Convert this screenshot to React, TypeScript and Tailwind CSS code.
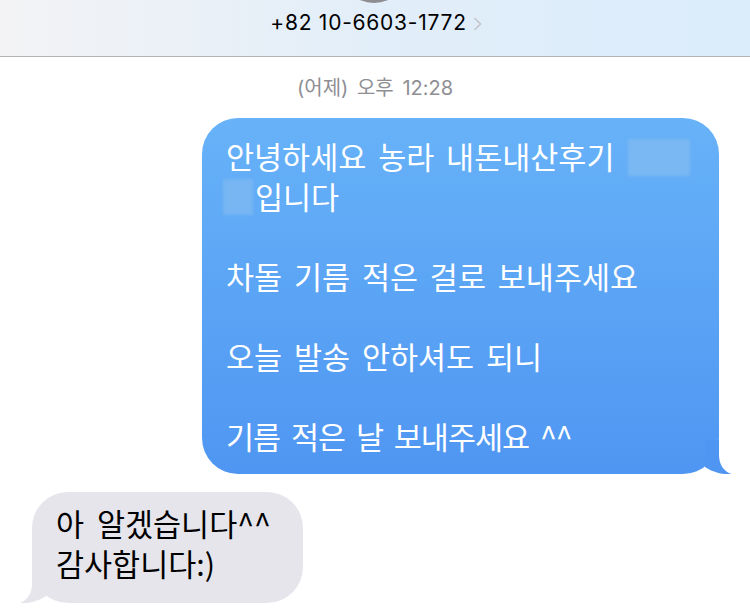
import React from "react";

const KR = '"Noto Sans CJK KR", "Noto Sans", sans-serif';
const UI = 'Inter, "Noto Sans CJK KR", sans-serif';

function BlueTail() {
  return (
    <svg
      className="absolute bottom-0 right-[-12px]"
      width="36"
      height="34"
      viewBox="0 0 36 34"
    >
      <path
        d="M12 0 L24 0 L24 15 C24 25 29 31 36 34 C29 35 17 32 10 27 L10 0 Z"
        fill="#4f96f2"
      />
    </svg>
  );
}

function GrayTail() {
  return (
    <svg
      className="absolute bottom-0 left-[-12px]"
      width="36"
      height="34"
      viewBox="0 0 36 34"
    >
      <path
        d="M24 0 L12 0 L12 15 C12 25 7 31 0 34 C7 35 19 32 26 27 L26 0 Z"
        fill="#e6e5eb"
      />
    </svg>
  );
}

function Line({ children, className = "" }: { children: React.ReactNode; className?: string }) {
  return (
    <div className={"flex h-[40px] items-center whitespace-nowrap " + className}>{children}</div>
  );
}

export default function App() {
  return (
    <div
      className="relative w-[750px] h-[614px] overflow-hidden bg-white"
      style={{ fontFamily: KR }}
    >
      {/* Header */}
      <div className="relative h-[57px] border-b border-[#b4b4b6] bg-gradient-to-r from-[#f3f3f5] via-[#e2eef9] to-[#dbecfb] flex items-start justify-center pt-[8px]">
        <div className="absolute left-[339px] top-[-67px] w-[70px] h-[70px] rounded-full bg-[#8d8d92]" />
        <div className="flex items-center gap-[6px] pl-[2px]">
          <span
            className="text-[21px] leading-[30px] text-black tracking-[0.75px]"
            style={{ fontFamily: "Inter, sans-serif" }}
          >
            +82 10-6603-1772
          </span>
          <svg width="9" height="14" viewBox="0 0 9 14" className="mt-[1px]">
            <path
              d="M1.5 1 L7.5 7 L1.5 13"
              fill="none"
              stroke="#c4c4c9"
              strokeWidth="1.6"
            />
          </svg>
        </div>
      </div>

      {/* Timestamp */}
      <div
        className="mt-[19px] text-center text-[20px] leading-[24px] text-[#8e8e93] [word-spacing:3px]"
        style={{ fontFamily: UI }}
      >
        (어제) 오후 12:28
      </div>

      {/* Outgoing bubble */}
      <div className="mt-[18px] flex justify-end pr-[31px]">
        <div className="relative w-[517px] rounded-[36px] bg-gradient-to-b from-[#67b2f8] to-[#4f96f2] pl-[24px] pr-[20px] pt-[19px] pb-[17px] text-white text-[30.5px] [word-spacing:5px]">
          <Line>
            <span>안녕하세요 농라 내돈내산후기</span>
            <span className="ml-[14px] w-[62px] h-[37px] bg-[#79b8f3] blur-[1.5px]" />
          </Line>
          <Line>
            <span className="ml-[-3px] mr-[2px] w-[30px] h-[36px] bg-[#77b6f3] blur-[1.5px]" />
            <span>입니다</span>
          </Line>
          <div className="h-[40px]" />
          <Line>차돌 기름 적은 걸로 보내주세요</Line>
          <div className="h-[40px]" />
          <Line>오늘 발송 안하셔도 되니</Line>
          <div className="h-[40px]" />
          <Line className="tracking-[-1px]">기름 적은 날 보내주세요 ^^</Line>
          <BlueTail />
        </div>
      </div>

      {/* Incoming bubble */}
      <div className="mt-[18px] pl-[32px]">
        <div className="relative w-[271px] rounded-[36px] bg-[#e6e5eb] pl-[24px] pt-[12px] pb-[19px] text-black text-[30.5px] [word-spacing:6px]">
          <Line>아 알겠습니다^^</Line>
          <Line>감사합니다:)</Line>
          <GrayTail />
        </div>
      </div>
    </div>
  );
}
